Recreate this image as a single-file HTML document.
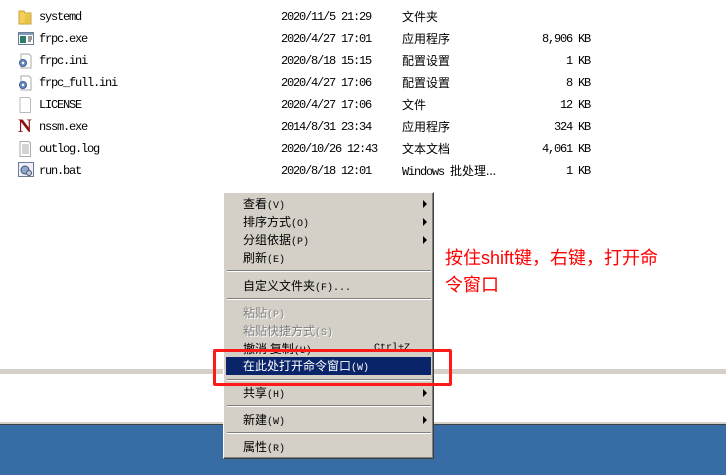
<!DOCTYPE html>
<html><head><meta charset="utf-8"><style>
*{margin:0;padding:0;box-sizing:border-box}
body{width:726px;height:475px;background:#fff;position:relative;overflow:hidden;font-family:"Liberation Mono","Noto Sans CJK SC",monospace;font-size:12px;color:#000}
.r{position:absolute;height:22px;line-height:22px;white-space:nowrap}
.m{letter-spacing:-1.2px}
.cjk{font-family:"Noto Sans CJK SC",sans-serif;font-size:12px;letter-spacing:0}
.ic{position:absolute;width:16px;height:16px}
#menu{position:absolute;left:223px;top:192px;width:211px;height:267px;background:#d4d0c8;border:1px solid #fff;border-right:1px solid #404040;border-bottom:1px solid #404040;box-shadow:inset -1px -1px #808080}
.it{position:absolute;left:0;width:208px;height:18px;line-height:18px;padding-left:19px;font-family:"Noto Sans CJK SC",sans-serif;font-size:12px;white-space:nowrap}
.it .k{font-family:"Liberation Mono",monospace;font-size:10px}
.dis{color:#808080;text-shadow:1px 1px #fff}
.sep{position:absolute;left:3px;width:204px;height:2px;border-top:1px solid #808080;border-bottom:1px solid #fff}
.ar{position:absolute;right:5px;top:5px;width:0;height:0;border-left:4px solid #000;border-top:4px solid transparent;border-bottom:4px solid transparent}
</style></head><body>
<div style="position:absolute;left:0;top:369px;width:726px;height:5px;background:#d4d0c8"></div>
<div style="position:absolute;left:0;top:422px;width:726px;height:2px;background:#d4d0c8"></div>
<div style="position:absolute;left:0;top:424px;width:726px;height:1px;background:#404040"></div>
<div style="position:absolute;left:0;top:425px;width:726px;height:50px;background:#386ca5"></div>

<svg class="ic" style="left:17px;top:9px" viewBox="0 0 16 16"><path d="M2 2h5l1 2h6v11H2z" fill="#f2cf5a" stroke="#c9a23a"/><rect x="8" y="6" width="5" height="8" fill="#e9c24a"/></svg>
<svg class="ic" style="left:18px;top:31px" viewBox="0 0 16 16"><rect x="0.5" y="1.5" width="15" height="12" fill="#fff" stroke="#6a7d90"/><rect x="1" y="2" width="14" height="2" fill="#7a9cc0"/><rect x="2" y="5" width="6" height="7" fill="#2e7d6a"/><path d="M10 6h4M10 8h4M10 10h3" stroke="#333"/></svg>
<svg class="ic" style="left:17px;top:53px" viewBox="0 0 16 16"><path d="M4 1h8l2 2v12H4z" fill="#fff" stroke="#aaa"/><circle cx="6" cy="10" r="3.5" fill="#6a8fc8" stroke="#3a5a90"/><circle cx="6" cy="10" r="1.2" fill="#fff"/></svg>
<svg class="ic" style="left:17px;top:75px" viewBox="0 0 16 16"><path d="M4 1h8l2 2v12H4z" fill="#fff" stroke="#aaa"/><circle cx="6" cy="10" r="3.5" fill="#6a8fc8" stroke="#3a5a90"/><circle cx="6" cy="10" r="1.2" fill="#fff"/></svg>
<svg class="ic" style="left:17px;top:97px" viewBox="0 0 16 16"><path d="M3 0.5h9l1.5 1.5v13.5H3z" fill="#fff" stroke="#bbb"/></svg>
<div style="position:absolute;left:18px;top:117px;font-family:'Liberation Serif',serif;font-weight:bold;font-size:19px;color:#8b1010;line-height:20px">N</div>
<svg class="ic" style="left:17px;top:141px" viewBox="0 0 16 16"><path d="M3 0.5h9l1.5 1.5v13.5H3z" fill="#fff" stroke="#aaa"/><path d="M5 4h7M5 6h7M5 8h7M5 10h7M5 12h7" stroke="#aaa"/></svg>
<svg class="ic" style="left:18px;top:162px" viewBox="0 0 16 16"><rect x="0.5" y="0.5" width="15" height="14" fill="#eef" stroke="#6a7d90"/><circle cx="7" cy="8" r="4" fill="#8fa8d0" stroke="#456"/><circle cx="11" cy="11" r="2.5" fill="#bcd" stroke="#456"/></svg>

<div class="r m" style="left:39px;top:6px">systemd</div><div class="r m" style="left:281px;top:6px">2020/11/5 21:29</div><div class="r cjk" style="left:402px;top:6px">文件夹</div>
<div class="r m" style="left:39px;top:28px">frpc.exe</div><div class="r m" style="left:281px;top:28px">2020/4/27 17:01</div><div class="r cjk" style="left:402px;top:28px">应用程序</div><div class="r m" style="right:136px;top:28px">8,906 KB</div>
<div class="r m" style="left:39px;top:50px">frpc.ini</div><div class="r m" style="left:281px;top:50px">2020/8/18 15:15</div><div class="r cjk" style="left:402px;top:50px">配置设置</div><div class="r m" style="right:136px;top:50px">1 KB</div>
<div class="r m" style="left:39px;top:72px">frpc_full.ini</div><div class="r m" style="left:281px;top:72px">2020/4/27 17:06</div><div class="r cjk" style="left:402px;top:72px">配置设置</div><div class="r m" style="right:136px;top:72px">8 KB</div>
<div class="r m" style="left:39px;top:94px">LICENSE</div><div class="r m" style="left:281px;top:94px">2020/4/27 17:06</div><div class="r cjk" style="left:402px;top:94px">文件</div><div class="r m" style="right:136px;top:94px">12 KB</div>
<div class="r m" style="left:39px;top:116px">nssm.exe</div><div class="r m" style="left:281px;top:116px">2014/8/31 23:34</div><div class="r cjk" style="left:402px;top:116px">应用程序</div><div class="r m" style="right:136px;top:116px">324 KB</div>
<div class="r m" style="left:39px;top:138px">outlog.log</div><div class="r m" style="left:281px;top:138px">2020/10/26 12:43</div><div class="r cjk" style="left:402px;top:138px">文本文档</div><div class="r m" style="right:136px;top:138px">4,061 KB</div>
<div class="r m" style="left:39px;top:160px">run.bat</div><div class="r m" style="left:281px;top:160px">2020/8/18 12:01</div><div class="r" style="left:402px;top:160px"><span class="m">Windows </span><span class="cjk">批处理...</span></div><div class="r m" style="right:136px;top:160px">1 KB</div>

<div style="position:absolute;left:445px;top:245px;width:270px;color:#f00;font-family:'Liberation Sans','Noto Sans CJK SC',sans-serif;font-size:18px;line-height:27px">按住shift键，右键，打开命<br>令窗口</div>

<div id="menu">
<div class="it" style="top:2px">查看<span class="k">(V)</span><i class="ar"></i></div>
<div class="it" style="top:20px">排序方式<span class="k">(O)</span><i class="ar"></i></div>
<div class="it" style="top:38px">分组依据<span class="k">(P)</span><i class="ar"></i></div>
<div class="it" style="top:56px">刷新<span class="k">(E)</span></div>
<div class="sep" style="top:77px"></div>
<div class="it" style="top:84px">自定义文件夹<span class="k">(F)...</span></div>
<div class="sep" style="top:105px"></div>
<div class="it dis" style="top:111px">粘贴<span class="k">(P)</span></div>
<div class="it dis" style="top:129px">粘贴快捷方式<span class="k">(S)</span></div>
<div class="it" style="top:147px">撤消 复制<span class="k">(U)</span><span class="k" style="position:absolute;left:150px">Ctrl+Z</span></div>
<div class="it" style="top:164px;left:2px;width:205px;padding-left:17px;background:#0a246a;color:#fff">在此处打开命令窗口<span class="k">(W)</span></div>
<div class="sep" style="top:186px"></div>
<div class="it" style="top:191px">共享<span class="k">(H)</span><i class="ar"></i></div>
<div class="sep" style="top:212px"></div>
<div class="it" style="top:218px">新建<span class="k">(W)</span><i class="ar"></i></div>
<div class="sep" style="top:239px"></div>
<div class="it" style="top:245px">属性<span class="k">(R)</span></div>
</div>

<div style="position:absolute;left:213px;top:349px;width:239px;height:37px;border:3px solid #ff1a1a;border-radius:2px"></div>
</body></html>
